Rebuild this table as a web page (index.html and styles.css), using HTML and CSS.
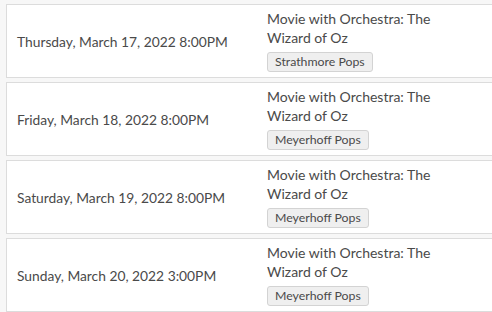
FILE: index.html
```html
<!DOCTYPE html>
<html>
<head>
<meta charset="utf-8">
<link rel="stylesheet" href="styles.css">
</head>
<body>
<div class="page">
  <div class="list">
    <div class="card">
      <div class="date">Thursday, March 17, 2022 8:00PM</div>
      <div class="info">
        <div class="title">Movie with Orchestra: The<br>Wizard of Oz</div>
        <span class="badge">Strathmore Pops</span>
      </div>
    </div>
    <div class="card">
      <div class="date">Friday, March 18, 2022 8:00PM</div>
      <div class="info">
        <div class="title">Movie with Orchestra: The<br>Wizard of Oz</div>
        <span class="badge">Meyerhoff Pops</span>
      </div>
    </div>
    <div class="card">
      <div class="date">Saturday, March 19, 2022 8:00PM</div>
      <div class="info">
        <div class="title">Movie with Orchestra: The<br>Wizard of Oz</div>
        <span class="badge">Meyerhoff Pops</span>
      </div>
    </div>
    <div class="card">
      <div class="date">Sunday, March 20, 2022 3:00PM</div>
      <div class="info">
        <div class="title">Movie with Orchestra: The<br>Wizard of Oz</div>
        <span class="badge">Meyerhoff Pops</span>
      </div>
    </div>
  </div>
</div>
</body>
</html>
```
FILE: styles.css
```css
html, body {
  margin: 0;
  padding: 0;
  background: #f7f7f7;
  overflow: hidden;
}
body {
  font-family: Lato, "Liberation Sans", sans-serif;
  color: #4a4a4a;
  width: 492px;
  height: 312px;
}
.page {
  padding: 4px 0 0 6px;
}
.list {
  display: flex;
  flex-direction: column;
  gap: 4px;
  width: 520px;
}
.card {
  display: grid;
  grid-template-columns: 260px 1fr;
  align-items: center;
  background: #fff;
  border: 1px solid #dcdcdc;
  height: 72px;
}
.date {
  padding-left: 10px;
  font-size: 13.8px;
}
.info {
  align-self: start;
  padding-top: 4px;
}
.title {
  font-size: 14px;
  line-height: 19px;
}
.badge {
  display: inline-block;
  margin-top: 5px;
  padding: 0 7px;
  height: 18px;
  line-height: 18px;
  font-size: 12.3px;
  background: #efefef;
  border: 1px solid #d3d3d3;
  border-radius: 3px;
}
```
